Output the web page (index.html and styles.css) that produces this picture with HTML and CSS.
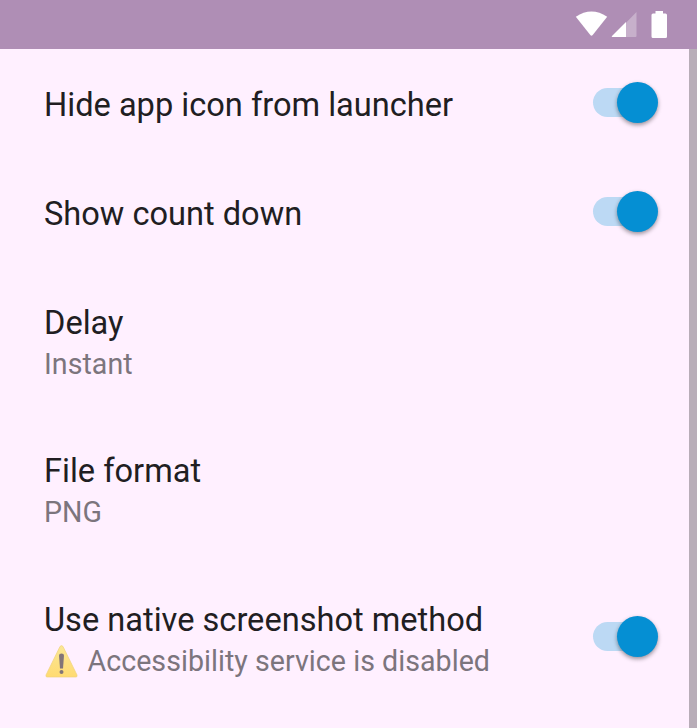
FILE: index.html
```html
<!DOCTYPE html>
<html lang="en">
<head>
<meta charset="utf-8">
<title>Settings</title>
<link rel="stylesheet" href="styles.css">
</head>
<body>
<header class="status">
<svg class="status-icons" width="100" height="48" viewBox="0 0 100 48">
<path fill="#fff" d="M4.800 16.800Q20.500 6 36.200 16.800L21.700 35Q20.500 36.500 19.300 35Z"/>
<path fill="#fff" opacity=".3" d="M65.500 12V36Q65.500 37 64.500 37H41Z"/>
<path fill="#fff" d="M55 22V37H41.500Q40 37 41 36Z"/>
<path fill="#fff" d="M84.500 11H92V13.500H94.500Q96 13.500 96 15V36.500Q96 38 94.500 38H82Q80.500 38 80.500 36.500V15Q80.500 13.500 82 13.500H84.500Z"/>
</svg>
</header>
<main class="list">
<section class="row single"><div><h2>Hide app icon from launcher</h2></div><span class="switch"></span></section>
<section class="row single"><div><h2>Show count down</h2></div><span class="switch"></span></section>
<section class="row"><div><h2>Delay</h2><p>Instant</p></div></section>
<section class="row"><div><h2>File format</h2><p>PNG</p></div></section>
<section class="row centered"><div><h2>Use native screenshot method</h2><p class="warning"><svg width="33" height="33" viewBox="0 0 33 33"><defs><linearGradient id="amber" x1="0" y1="0" x2="0" y2="1"><stop offset="0" stop-color="#fae795"/><stop offset="1" stop-color="#ffdb72"/></linearGradient></defs><path fill="url(#amber)" stroke="#f0d27c" stroke-width=".7" d="M16 1.500Q17.500-.3 19 1.500L33 30Q33.500 32 32 32H3Q1.500 32 2 30Z"/><path fill="#827578" d="M15 10.500Q15 8.500 17.500 8.500Q20 8.500 20 10.500L19 23.500H16Z"/><circle cx="17.500" cy="27" r="2" fill="#827578"/></svg>Accessibility service is disabled</p></div><span class="switch"></span></section>
</main>
</body>
</html>
```
FILE: styles.css
```css
* { box-sizing: border-box; }
body { margin: 0; height: 728px; overflow: hidden; background: #fff0ff; font-family: Roboto, sans-serif; color: #211e22; }
.status { height: 48.5px; background: #af8eb5; display: flex; justify-content: flex-end; padding-right: 26px; }
.status-icons { display: block; width: 100px; height: 48px; }
.list { height: 680px; border-right: 8px solid #b8adb8; }
.row { height: 148.3px; padding: 31.9px 30px 0 44px; display: flex; justify-content: space-between; }
.single { height: 108.8px; }
h2, p { margin: 0; font-weight: 400; white-space: nowrap; }
h2 { font-size: 32.6px; line-height: 50px; }
p { font-size: 28.6px; line-height: 32px; letter-spacing: .03px; color: #7c757d; }
.warning { display: flex; }
.warning svg { margin: 0 11px 0 -.5px; overflow: visible; }
.switch { width: 66.500px; height: 48px; display: flex; }
.switch::before { content: ""; width: 56px; height: 29px; margin-top: 7.5px; border-radius: 15px; background: #bcd9f4; }
.switch::after { content: ""; flex: none; width: 41px; height: 41px; margin: 1.600px 0 0 -32px; border-radius: 50%; background: #058fd3; box-shadow: 0 2px 4px #0006; }
.centered .switch { margin-top: 20px; }
```
